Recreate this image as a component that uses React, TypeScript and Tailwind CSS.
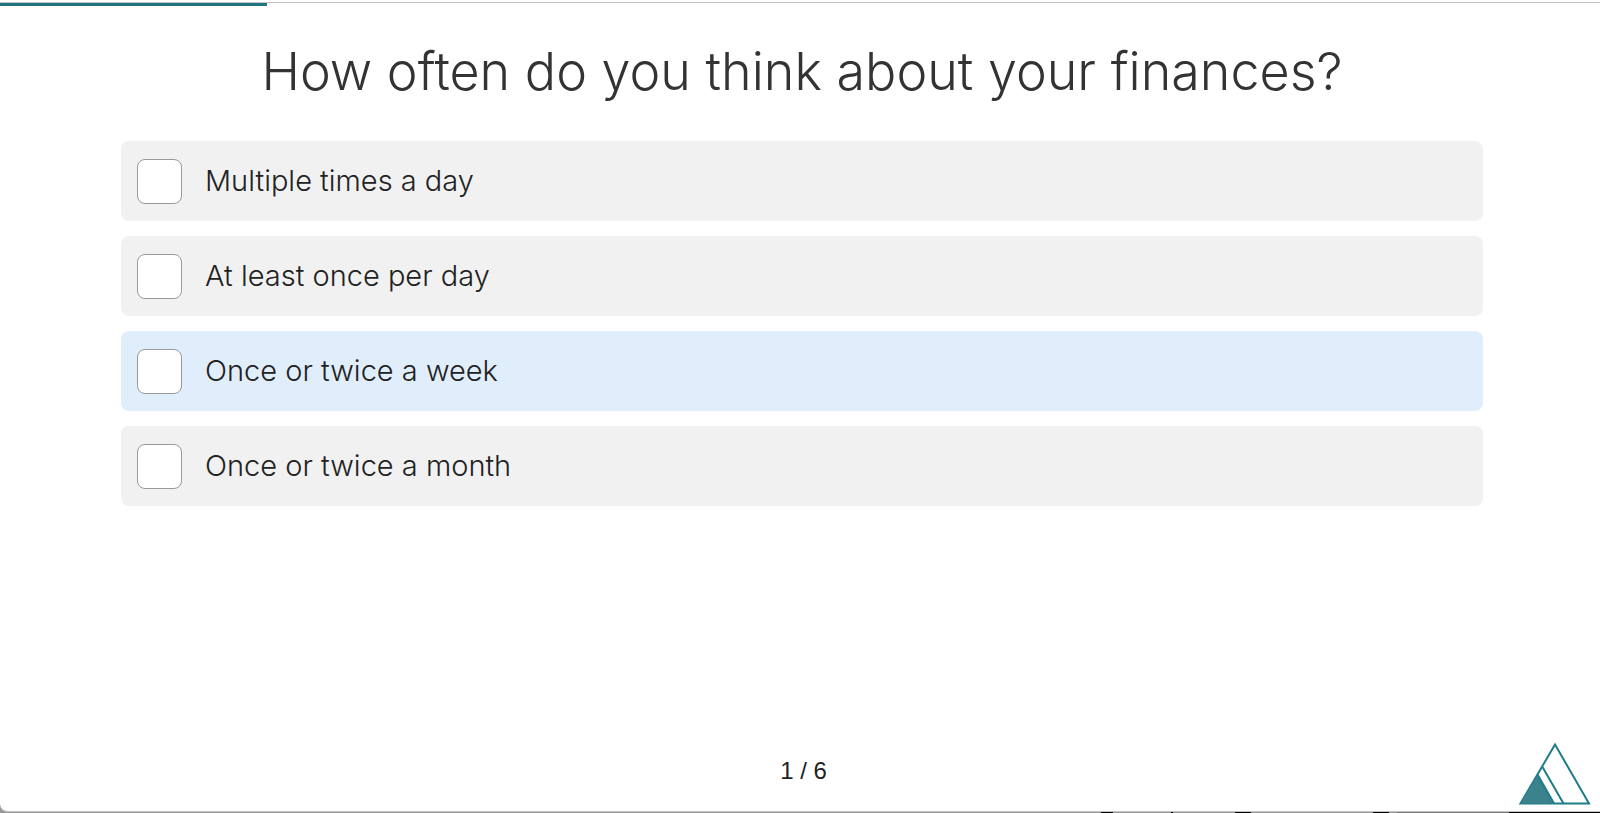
import { useState } from "react";

interface Answer { id: number, label: string, highlighted?: boolean }

const answers: Answer[] = [
    { id: 1, label: "Multiple times a day" },
    { id: 2, label: "At least once per day" },
    { id: 3, label: "Once or twice a week", highlighted: true },
    { id: 4, label: "Once or twice a month" },
]
const step = 1
const total = 6
const rowClass = "flex h-20 items-center gap-[23px] rounded-lg pl-4 text-[29px] leading-9 font-light text-[#222]"

const Logo = () => (
    <svg className="h-[63px] w-[72px]" viewBox="0 0 72 63" fill="none" stroke="#1f7c89" strokeWidth="2">
        <path d="M1.5 61.5 36 2.5 70 61.5Z" />
        <path d="M18.5 33 1.5 61.5H35.5Z" fill="#3b828d" stroke="none" />
        <path d="M18.5 32.5 35 61.5M23.5 25 44.5 61.5" />
    </svg>
)

const App = () => {
    const [selected, setSelected] = useState<number[]>([])
    const toggle = (id: number) => setSelected((ids) => (
        ids.includes(id) ? ids.filter((i) => i !== id) : [...ids, id]
    ))
    return (
        <div className="flex min-h-screen flex-col bg-[#999] font-['Inter',sans-serif]">
            <div className="flex grow flex-col rounded-bl-lg border-b border-[#c4c4c4] bg-white">
                <header className="mt-0.5 border-t border-[#c4c4c4]">
                    <div className="h-[3px] w-1/6 bg-[#1f7480]"></div>
                </header>
                <main className="flex grow flex-col pr-[117px] pl-[121px]">
                    <h1 className="pt-8 text-center text-[52px] leading-[68px] font-light text-[#333]">How often do you think about your finances?</h1>
                    <div className="mt-[35px] flex flex-col gap-[15px]">
                        {answers.map(({ id, label, highlighted }) => (
                            <label key={id} className={`${rowClass} ${highlighted ? "bg-[#e0eefc]" : "bg-[#f1f1f1]"}`}>
                                <input
                                    className="size-[45px] appearance-none rounded-lg border border-[#999] bg-white checked:bg-[#1f7480]"
                                    type="checkbox"
                                    checked={selected.includes(id)}
                                    onChange={() => toggle(id)}
                                />
                                <span>{label}</span>
                            </label>
                        ))}
                    </div>
                </main>
                <footer className="grid grid-cols-[1fr_auto_1fr] items-end pr-[9px] pl-4">
                    <p className="col-start-2 pb-[22px] font-['Liberation_Sans',sans-serif] text-2xl leading-9 text-[#222]">{step} / {total}</p>
                    <a href="#" aria-label="Home" className="justify-self-end pb-[6px]"><Logo /></a>
                </footer>
            </div>
            <div className="flex h-px justify-end">
                <div className="mr-[58px] w-3 bg-black"></div>
                <div className="mr-[62px] w-0.5 bg-black"></div>
                <div className="mr-[122px] w-4 bg-black"></div>
                <div className="mr-2 w-4 bg-black"></div>
                <div className="w-28 bg-[#777]"></div>
                <div className="w-[91px] bg-black"></div>
            </div>
        </div>
    )
}

export default App;
